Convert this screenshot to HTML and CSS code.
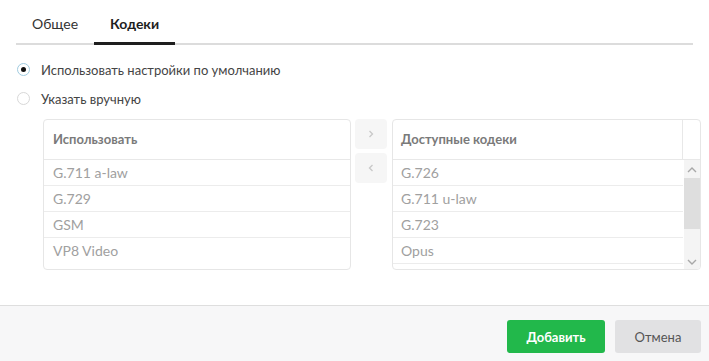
FILE: index.html
```html
<!DOCTYPE html>
<html lang="ru">
<head>
    <meta charset="UTF-8">
    <title>Кодеки</title>
    <link rel="stylesheet" href="styles.css">
</head>
<body>
    <div class="dialog">
        <div class="tabs">
            <div class="tab">Общее</div>
            <div class="tab active">Кодеки</div>
        </div>

        <div class="options">
            <label class="radio-row">
                <span class="radio checked"></span>
                Использовать настройки по умолчанию
            </label>
            <label class="radio-row">
                <span class="radio"></span>
                Указать вручную
            </label>
        </div>

        <div class="codecs">
            <div class="list">
                <div class="list-head">Использовать</div>
                <div class="list-item">G.711 a-law</div>
                <div class="list-item">G.729</div>
                <div class="list-item">GSM</div>
                <div class="list-item">VP8 Video</div>
            </div>

            <div class="moves">
                <div class="move">
                    <svg width="8" height="8" viewBox="0 0 8 8"><path d="M2.5 1 L5.5 4 L2.5 7" fill="none" stroke="#c8c8c8" stroke-width="1.3"/></svg>
                </div>
                <div class="move">
                    <svg width="8" height="8" viewBox="0 0 8 8"><path d="M5.5 1 L2.5 4 L5.5 7" fill="none" stroke="#c8c8c8" stroke-width="1.3"/></svg>
                </div>
            </div>

            <div class="list wide">
                <div class="list-head split">
                    <span>Доступные кодеки</span>
                    <span class="head-gap"></span>
                </div>
                <div class="list-body">
                    <div class="rows">
                        <div class="list-item">G.726</div>
                        <div class="list-item">G.711 u-law</div>
                        <div class="list-item">G.723</div>
                        <div class="list-item">Opus</div>
                    </div>
                    <div class="scrollbar">
                        <svg class="arrow" width="10" height="6" viewBox="0 0 10 6"><path d="M1 5 L5 1 L9 5" fill="none" stroke="#a8a8a8" stroke-width="1.4"/></svg>
                        <div class="thumb"></div>
                        <svg class="arrow down" width="10" height="6" viewBox="0 0 10 6"><path d="M1 1 L5 5 L9 1" fill="none" stroke="#a8a8a8" stroke-width="1.4"/></svg>
                    </div>
                </div>
            </div>
        </div>

        <div class="footer">
            <button class="btn btn-primary">Добавить</button>
            <button class="btn btn-cancel">Отмена</button>
        </div>
    </div>
</body>
</html>
```

FILE: styles.css
```css
body {
    margin: 0;
    background-color: #fff;
    font-family: Lato, "Open Sans", sans-serif;
    color: #333;
}
.dialog {
    width: 709px;
    height: 361px;
    display: flex;
    flex-direction: column;
}
.tabs {
    display: flex;
    margin: 0 16px;
    border-bottom: 2px solid #dcdcdc;
}
.tab {
    padding: 14px 16px 8px;
    line-height: 20px;
    font-size: 14px;
    color: #333;
    border-bottom: 3px solid transparent;
    margin-bottom: -2px;
}
.tab.active {
    font-weight: bold;
    color: #1e1e1e;
    border-bottom-color: #1e1e1e;
}
.options {
    padding: 10px 0 0 17px;
}
.radio-row {
    display: flex;
    align-items: center;
    height: 29px;
    font-size: 13px;
    color: #444;
}
.radio {
    width: 11px;
    height: 11px;
    border: 1px solid #d8d8d8;
    border-radius: 50%;
    margin-right: 11px;
    position: relative;
}
.radio.checked {
    border-color: #9fcbe0;
}
.radio.checked::after {
    content: "";
    position: absolute;
    left: 3px;
    top: 3px;
    width: 5px;
    height: 5px;
    border-radius: 50%;
    background-color: #111;
}
.codecs {
    display: flex;
    padding: 6px 0 0 43px;
}
.list {
    width: 306px;
    height: 149px;
    border: 1px solid #e6e6e6;
    border-radius: 4px;
    overflow: hidden;
}
.list.wide {
    width: 307px;
}
.list-head {
    height: 39px;
    line-height: 39px;
    padding-left: 9px;
    font-size: 13px;
    font-weight: bold;
    color: #7a7a7a;
    border-bottom: 1px solid #e8e8e8;
}
.list-head.split {
    display: flex;
    padding-left: 0;
}
.list-head.split span:first-child {
    flex: 1;
    padding-left: 8px;
}
.head-gap {
    width: 17px;
    border-left: 1px solid #e8e8e8;
}
.list-item {
    height: 25px;
    line-height: 25px;
    padding-left: 9px;
    font-size: 14px;
    color: #a0a0a0;
    border-bottom: 1px solid #ececec;
}
.list > .list-item:last-child {
    border-bottom: none;
}
.list-body {
    display: flex;
    height: 109px;
}
.rows {
    flex: 1;
}
.rows .list-item {
    padding-left: 8px;
}
.scrollbar {
    width: 16px;
    margin-left: 1px;
    background-color: #f4f4f4;
    display: flex;
    flex-direction: column;
    align-items: center;
}
.arrow {
    margin: 7px 0 5px;
}
.arrow.down {
    margin: auto 0 4px;
}
.thumb {
    width: 16px;
    height: 51px;
    background-color: #dedede;
}
.moves {
    display: flex;
    flex-direction: column;
    gap: 4px;
    margin: 0 5px 0 4px;
}
.move {
    width: 32px;
    height: 30px;
    border-radius: 4px;
    background-color: #f6f6f6;
    display: flex;
    align-items: center;
    justify-content: center;
}
.footer {
    margin-top: auto;
    height: 56px;
    border-top: 1px solid #dedede;
    background-color: #f7f7f8;
    display: flex;
    justify-content: flex-end;
    align-items: flex-start;
    padding: 14px 8px 0 0;
    box-sizing: border-box;
    gap: 10px;
}
.btn {
    height: 33px;
    border: none;
    border-radius: 3px;
    font-family: Lato, "Open Sans", sans-serif;
    font-size: 13px;
    cursor: pointer;
}
.btn-primary {
    width: 98px;
    background-color: #22b84b;
    color: #fff;
    font-weight: bold;
}
.btn-cancel {
    width: 86px;
    background-color: #e1e1e3;
    color: #555;
}
```
